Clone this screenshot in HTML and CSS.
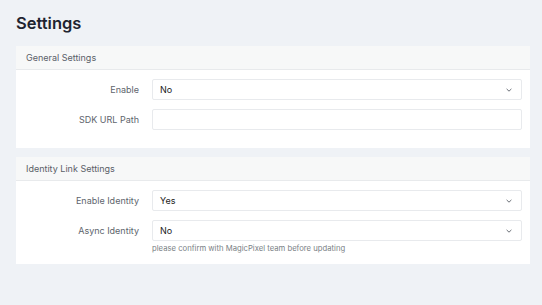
FILE: index.html
```html
<!DOCTYPE html>
<html lang="en">
<head>
<meta charset="utf-8">
<title>Settings</title>
<link rel="stylesheet" href="styles.css">
</head>
<body>
<div class="page">
  <h1 class="title">Settings</h1>

  <section class="card">
    <div class="card-header">General Settings</div>
    <div class="card-body">
      <div class="row">
        <label class="label">Enable</label>
        <div class="field">
          <div class="select"><span>No</span>
            <svg class="chev" viewBox="0 0 8 8" width="8" height="8"><path d="M1.6 2.9 L4 5.2 L6.4 2.9" fill="none" stroke="#6b7078" stroke-width="1"/></svg>
          </div>
        </div>
      </div>
      <div class="row">
        <label class="label">SDK URL Path</label>
        <div class="field"><div class="input"></div></div>
      </div>
    </div>
  </section>

  <section class="card">
    <div class="card-header">Identity Link Settings</div>
    <div class="card-body tight">
      <div class="row">
        <label class="label">Enable Identity</label>
        <div class="field">
          <div class="select"><span>Yes</span>
            <svg class="chev" viewBox="0 0 8 8" width="8" height="8"><path d="M1.6 2.9 L4 5.2 L6.4 2.9" fill="none" stroke="#6b7078" stroke-width="1"/></svg>
          </div>
        </div>
      </div>
      <div class="row">
        <label class="label">Async Identity</label>
        <div class="field">
          <div class="select"><span>No</span>
            <svg class="chev" viewBox="0 0 8 8" width="8" height="8"><path d="M1.6 2.9 L4 5.2 L6.4 2.9" fill="none" stroke="#6b7078" stroke-width="1"/></svg>
          </div>
          <div class="help">please confirm with MagicPixel team before updating</div>
        </div>
      </div>
    </div>
  </section>
</div>
</body>
</html>
```

FILE: styles.css
```css
* { box-sizing: border-box; }
html, body { margin: 0; padding: 0; }
body {
  background: #eff2f6;
  font-family: Inter, "Noto Sans", sans-serif;
  color: #222;
}
.page {
  padding: 12px 12px 0 16px;
}
.title {
  margin: 0 0 12px;
  font-size: 16.5px;
  line-height: 22px;
  font-weight: 600;
  color: #1e2430;
}
.card {
  background: #fff;
  margin-bottom: 9px;
}
.card-header {
  height: 24px;
  line-height: 23px;
  padding: 0 10px;
  background: #f7f8f8;
  border-bottom: 1px solid #e8eaec;
  font-size: 9px;
  color: #5a6068;
}
.card-body {
  display: flex;
  flex-direction: column;
  gap: 9px;
  padding: 9px 8px 18px 0;
}
.card-body.tight { padding-bottom: 9px; }
.row {
  display: grid;
  grid-template-columns: 123px 1fr;
  column-gap: 13px;
  align-items: start;
}
.label {
  text-align: right;
  font-size: 9px;
  line-height: 21px;
  color: #60656d;
}
.select, .input {
  height: 21px;
  border: 1px solid #e8eaed;
  border-radius: 2px;
  background: #fff;
}
.select {
  display: flex;
  align-items: center;
  justify-content: space-between;
  padding: 0 8px 0 7px;
  font-size: 9px;
  color: #222;
}
.chev { display: block; }
.help {
  margin-top: 2px;
  font-size: 7.7px;
  line-height: 12px;
  color: #7a7f86;
}
```
